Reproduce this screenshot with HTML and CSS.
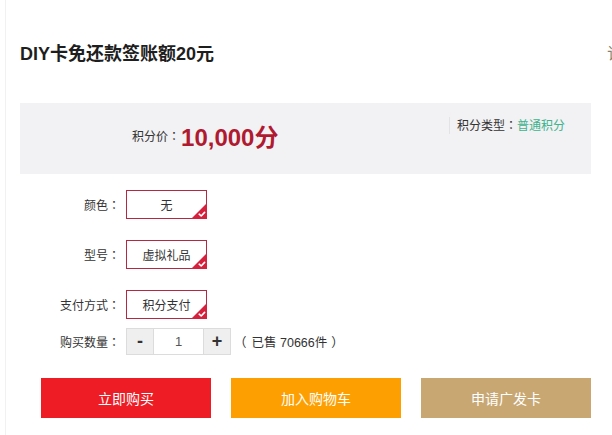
FILE: index.html
```html
<!DOCTYPE html>
<html lang="zh-CN">
<head>
<meta charset="utf-8">
<title>DIY卡免还款签账额20元</title>
<link rel="stylesheet" href="styles.css">
</head>
<body>
<div class="page">
  <div class="main">
    <h1 class="title">DIY卡免还款签账额20元</h1>
    <div class="price-box">
      <div class="price">
        <span class="price-label">积分价<span class="colon" lang="ja">：</span></span><span class="price-value">10,000分</span>
      </div>
      <div class="ptype">积分类型<span class="colon" lang="ja">：</span><span class="ptype-value">普通积分</span></div>
    </div>
    <div class="options">
      <div class="row">
        <span class="label">颜色<span class="colon" lang="ja">：</span></span>
        <span class="choice">无<i class="badge"><svg viewBox="0 0 16 16" width="16" height="16"><path d="M16 0V16H0Z" fill="#d5213d"/><path d="M8.2 11.2l2 1.8 3.4-3.6" fill="none" stroke="#fff" stroke-width="1.6" stroke-linecap="round" stroke-linejoin="round"/></svg></i></span>
      </div>
      <div class="row">
        <span class="label">型号<span class="colon" lang="ja">：</span></span>
        <span class="choice">虚拟礼品<i class="badge"><svg viewBox="0 0 16 16" width="16" height="16"><path d="M16 0V16H0Z" fill="#d5213d"/><path d="M8.2 11.2l2 1.8 3.4-3.6" fill="none" stroke="#fff" stroke-width="1.6" stroke-linecap="round" stroke-linejoin="round"/></svg></i></span>
      </div>
      <div class="row">
        <span class="label">支付方式<span class="colon" lang="ja">：</span></span>
        <span class="choice">积分支付<i class="badge"><svg viewBox="0 0 16 16" width="16" height="16"><path d="M16 0V16H0Z" fill="#d5213d"/><path d="M8.2 11.2l2 1.8 3.4-3.6" fill="none" stroke="#fff" stroke-width="1.6" stroke-linecap="round" stroke-linejoin="round"/></svg></i></span>
      </div>
      <div class="row qty-row">
        <span class="label">购买数量<span class="colon" lang="ja">：</span></span>
        <div class="qty">
          <span class="qty-btn">-</span><span class="qty-input">1</span><span class="qty-btn">+</span>
        </div>
        <span class="sold"><span class="paren-open">（</span>已售 70666件<span class="paren-close">）</span></span>
      </div>
    </div>
    <div class="actions">
      <a class="btn btn-buy">立即购买</a>
      <a class="btn btn-cart">加入购物车</a>
      <a class="btn btn-apply">申请广发卡</a>
    </div>
  </div>
  <div class="aside">订</div>
</div>
</body>
</html>
```
FILE: styles.css
```css
html, body {
  margin: 0;
  padding: 0;
  background: #fff;
  overflow: hidden;
}
body {
  font-family: "Liberation Sans", Arial, "Noto Sans CJK SC", sans-serif;
  color: #333;
  font-size: 12px;
}
.page {
  display: flex;
  width: 640px;
  height: 435px;
}
.main {
  margin-left: 5px;
  border-left: 1px solid #f1f1f1;
  padding: 42px 16px 0 14px;
  width: 571px;
  flex: none;
}
.title {
  margin: 0;
  font-size: 18px;
  line-height: 24px;
  font-weight: bold;
  color: #1e1e1e;
}
.colon {
  font-family: "Noto Sans CJK JP", sans-serif;
}
.price-box {
  margin-top: 37px;
  height: 71px;
  box-sizing: border-box;
  background: #f2f1f4;
  display: flex;
  justify-content: space-between;
  align-items: flex-start;
  padding: 14px 26px 0 112px;
}
.price {
  display: flex;
  align-items: center;
  height: 30px;
  margin-top: 3px;
}
.price-label {
  font-size: 12px;
  color: #333;
}
.price-value {
  font-size: 24px;
  font-weight: bold;
  color: #b01a30;
  margin-left: 1px;
}
.ptype {
  line-height: 16px;
  border-left: 1px solid #e3e2e6;
  padding-left: 7px;
  color: #333;
}
.ptype-value {
  color: #3fb38c;
}
.options {
  margin-top: 16px;
  display: flex;
  flex-direction: column;
  gap: 21px;
}
.row {
  display: flex;
  align-items: center;
}
.label {
  width: 100px;
  text-align: right;
  margin-right: 6px;
  color: #333;
}
.choice {
  position: relative;
  width: 81px;
  height: 29px;
  box-sizing: border-box;
  border: 1px solid #b42842;
  display: flex;
  align-items: center;
  justify-content: center;
  font-family: "Noto Sans CJK SC", sans-serif;
  font-size: 12px;
  color: #333;
  background: #fff;
}
.badge {
  position: absolute;
  right: -1px;
  bottom: -1px;
  width: 16px;
  height: 16px;
  display: block;
  line-height: 0;
}
.qty-row {
  margin-top: -12px;
}
.qty {
  display: flex;
  height: 27px;
  border: 1px solid #dcdcdc;
  box-sizing: border-box;
}
.qty-btn {
  width: 26px;
  background: #efefef;
  display: flex;
  align-items: center;
  justify-content: center;
  font-size: 18px;
  font-weight: bold;
  color: #333;
}
.qty-input {
  width: 49px;
  border-left: 1px solid #dcdcdc;
  border-right: 1px solid #dcdcdc;
  display: flex;
  align-items: center;
  justify-content: center;
  font-size: 13px;
  color: #555;
  background: #fff;
}
.sold {
  margin-left: 8px;
  color: #333;
  font-size: 12.5px;
}
.paren-open {
  margin-left: -5px;
  margin-right: 5px;
}
.paren-close {
  margin-left: 4px;
}
.actions {
  margin-top: 23px;
  margin-left: 21px;
  display: flex;
  gap: 20px;
}
.btn {
  width: 170px;
  height: 40px;
  display: flex;
  align-items: center;
  justify-content: center;
  color: #fff;
  font-size: 14px;
  text-decoration: none;
}
.btn-buy { background: #ee1c24; }
.btn-cart { background: #fe9f01; }
.btn-apply { background: #c8a773; }
.aside {
  flex: none;
  padding-top: 40px;
  font-family: "Noto Sans CJK SC", sans-serif;
  font-size: 16px;
  color: #8f7f62;
}
```
